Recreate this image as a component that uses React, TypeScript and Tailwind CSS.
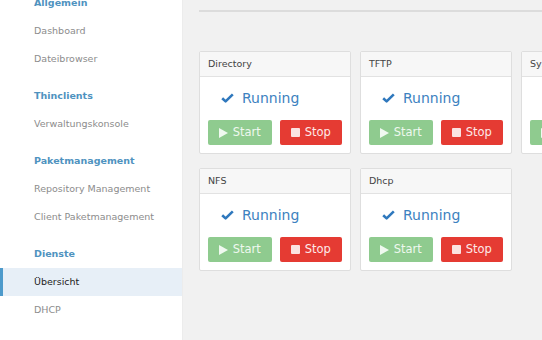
import React from 'react';

const font = { fontFamily: '"DejaVu Sans", Verdana, sans-serif' };

type NavItem = { label: string; active?: boolean };
type NavGroup = { title: string; items: NavItem[] };

const groups: NavGroup[] = [
  { title: 'Allgemein', items: [{ label: 'Dashboard' }, { label: 'Dateibrowser' }] },
  { title: 'Thinclients', items: [{ label: 'Verwaltungskonsole' }] },
  { title: 'Paketmanagement', items: [{ label: 'Repository Management' }, { label: 'Client Paketmanagement' }] },
  { title: 'Dienste', items: [{ label: 'Übersicht', active: true }, { label: 'DHCP' }] },
  { title: 'System', items: [] },
];

const services = [['Directory', 'TFTP', 'System'], ['NFS', 'Dhcp']];

const Check = () => (
  <svg width="13" height="10" viewBox="0 0 13 10" className="shrink-0">
    <path d="M1.2 5.2 L4.6 8.4 L11.8 1.4" fill="none" stroke="#2f78bd" strokeWidth="2.6" strokeLinejoin="round" />
  </svg>
);

const ServiceCard: React.FC<{ name: string }> = ({ name }) => (
  <div className="w-[152px] shrink-0 bg-white border border-[#dedede] rounded-[2px]">
    <div className="h-[25px] flex items-center px-2 bg-[#f7f7f7] border-b border-[#e2e2e2] text-[9.5px] text-[#444]">
      {name}
    </div>
    <div className="px-2 pt-[11px] pb-[8px]">
      <div className="flex items-center gap-[8px] pl-[13px] h-[20px] text-[14px] text-[#3d82c0]">
        <Check />
        <span>Running</span>
      </div>
      <div className="flex gap-2 mt-[12px]">
        <button className="w-[64px] h-[25px] flex items-center justify-center gap-[5px] bg-[#8fcb8f] rounded-[2px] text-[11.5px] text-[#eef8ee]">
          <svg width="9" height="10" viewBox="0 0 9 10"><path d="M0 0 L9 5 L0 10 Z" fill="#f0f9f0" /></svg>
          Start
        </button>
        <button className="w-[63px] h-[25px] flex items-center justify-center gap-[5px] bg-[#e53b33] rounded-[2px] text-[11.5px] text-[#fde9e8]">
          <span className="w-[9px] h-[9px] bg-[#fbe3e1] rounded-[1px]" />
          Stop
        </button>
      </div>
    </div>
  </div>
);

export default function App() {
  return (
    <div className="w-[542px] h-[340px] overflow-hidden flex bg-[#f1f1f1]" style={font}>
      <aside className="w-[183px] shrink-0 bg-white border-r border-[#ececec]">
        <div className="-mt-[11px]">
          {groups.map((g, gi) => (
            <div key={g.title} className={gi > 0 ? 'mt-[9px]' : ''}>
              <div className="h-[28px] flex items-center pl-[34px] text-[9.5px] font-bold text-[#4f93bf]">{g.title}</div>
              {g.items.map((it) => (
                <div
                  key={it.label}
                  className={
                    it.active
                      ? 'h-[28px] flex items-center pl-[31px] text-[9.5px] text-[#222] bg-[#e7eff7] border-l-[3px] border-[#4d9acb]'
                      : 'h-[28px] flex items-center pl-[34px] text-[9.5px] text-[#8c8c8c]'
                  }
                >
                  {it.label}
                </div>
              ))}
            </div>
          ))}
        </div>
      </aside>
      <main className="flex-1 pl-4 min-w-0">
        <div className="h-[12px] border-b-2 border-[#dcdcdc]" />
        <div className="mt-[39px] flex flex-col gap-[14px]">
          {services.map((row, ri) => (
            <div key={ri} className="flex gap-[9px]">
              {row.map((s) => (
                <ServiceCard key={s} name={s} />
              ))}
            </div>
          ))}
        </div>
      </main>
    </div>
  );
}
